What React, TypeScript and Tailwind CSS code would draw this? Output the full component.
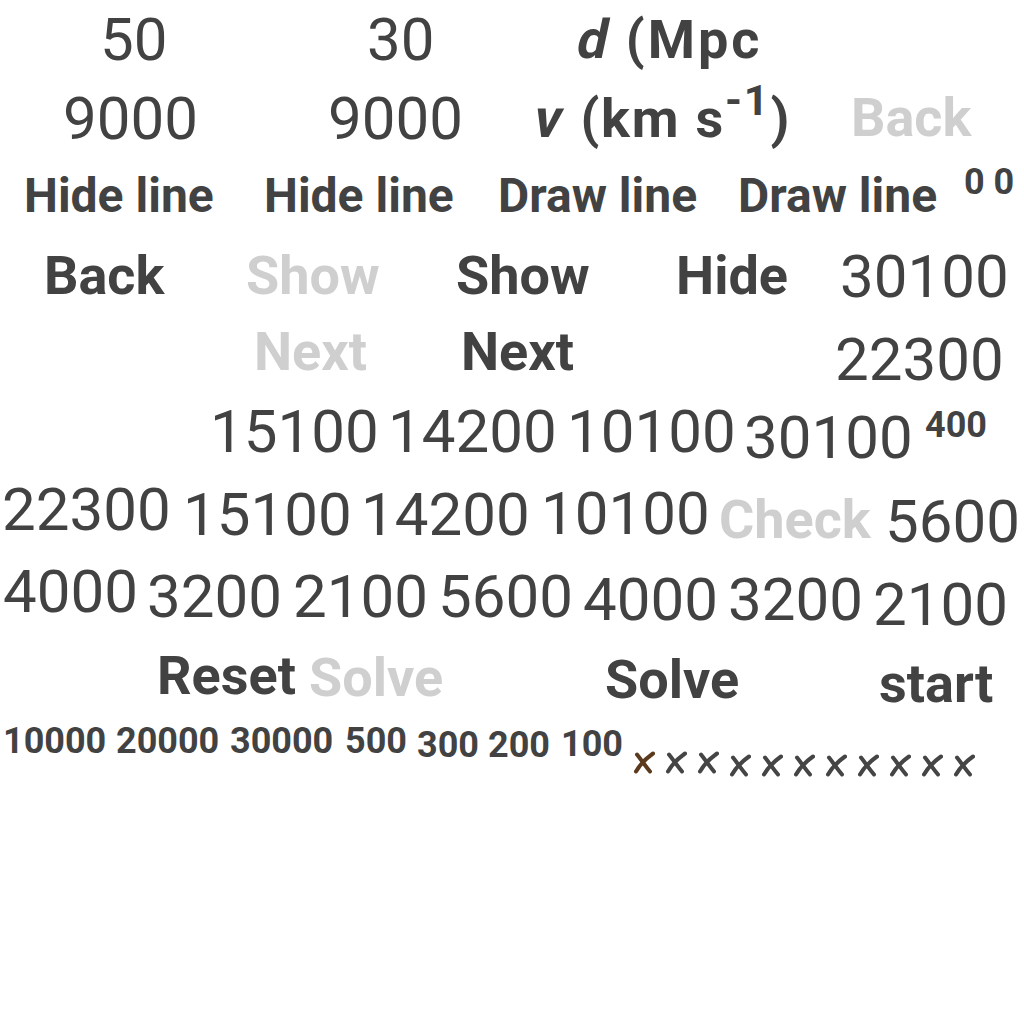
const dark = "text-[#424242]"

function Mark({ brown }: { brown?: boolean }) {
  return (
    <svg viewBox="0 0 22 22" className="w-[22px] h-[23px] shrink-0">
      <g
        fill="none"
        stroke={brown ? "#5b3a1e" : "#454545"}
        strokeWidth="4"
        strokeLinecap="round"
      >
        <path d="M4 3 C8 8 12 14 17 20" />
        <path d="M20 2 C13 7 7 13 3 20" />
      </g>
    </svg>
  )
}

export default function App() {
  return (
    <div className="w-[1024px] h-[1024px] bg-white overflow-hidden font-['Roboto',sans-serif] text-[#424242] whitespace-nowrap">
      {/* row: d */}
      <div className="flex items-start h-[85px] pl-[100px]">
        <span className="shrink-0 w-[267px] mt-[10px] text-[60px] leading-none">50</span>
        <span className="shrink-0 w-[211px] mt-[10px] text-[60px] leading-none">30</span>
        <span className="shrink-0 mt-[13px] text-[54px] leading-none font-bold tracking-[3px]">
          <span className="inline-block -skew-x-12 -mr-[2px]">d</span> (Mpc
        </span>
      </div>

      {/* row: v */}
      <div className="flex items-start h-[75px] pl-[63px]">
        <span className="shrink-0 w-[265px] mt-[4px] text-[60px] leading-none">9000</span>
        <span className="shrink-0 w-[207px] mt-[4px] text-[60px] leading-none">9000</span>
        <span className="shrink-0 w-[316px] mt-[7px] text-[54px] leading-none font-bold tracking-[1.8px]">
          <span className="inline-block -skew-x-12 mr-[1px]">v</span> (km s<sup className="text-[80%]">-1</sup>)
        </span>
        <span className="shrink-0 mt-[6px] text-[54px] leading-none font-bold text-[#cfcfcf]">Back</span>
      </div>

      {/* line toggles */}
      <div className="flex items-start h-[80px] pl-[24px]">
        <span className="shrink-0 w-[240px] mt-[12px] text-[48px] leading-none font-bold">Hide line</span>
        <span className="shrink-0 w-[234px] mt-[12px] text-[48px] leading-none font-bold">Hide line</span>
        <span className="shrink-0 w-[240px] mt-[12px] text-[48px] leading-none font-bold">Draw line</span>
        <span className="shrink-0 w-[226px] mt-[12px] text-[48px] leading-none font-bold">Draw line</span>
        <span className="shrink-0 mt-[4px] text-[36px] leading-none font-bold">0 0</span>
      </div>

      <div className="flex items-start h-[80px] pl-[44px]">
        <span className="shrink-0 w-[202px] mt-[9px] text-[54px] leading-none font-bold">Back</span>
        <span className="shrink-0 w-[210px] mt-[9px] text-[54px] leading-none font-bold text-[#cfcfcf]">Show</span>
        <span className="shrink-0 w-[220px] mt-[9px] text-[54px] leading-none font-bold">Show</span>
        <span className="shrink-0 w-[164px] mt-[9px] text-[54px] leading-none font-bold">Hide</span>
        <span className="shrink-0 mt-[7px] text-[60px] leading-none">30100</span>
      </div>

      <div className="flex items-start h-[80px] pl-[254px]">
        <span className="shrink-0 w-[207px] mt-[5px] text-[54px] leading-none font-bold text-[#cfcfcf]">Next</span>
        <span className="shrink-0 w-[374px] mt-[5px] text-[54px] leading-none font-bold">Next</span>
        <span className="shrink-0 mt-[10px] text-[60px] leading-none">22300</span>
      </div>

      {/* velocities */}
      <div className="flex items-start h-[75px] pl-[210px]">
        <span className="shrink-0 w-[178px] mt-[2px] text-[60px] leading-none">15100</span>
        <span className="shrink-0 w-[179px] mt-[2px] text-[60px] leading-none">14200</span>
        <span className="shrink-0 w-[177px] mt-[2px] text-[60px] leading-none">10100</span>
        <span className="shrink-0 w-[181px] mt-[8px] text-[60px] leading-none">30100</span>
        <span className="shrink-0 mt-[7px] text-[36px] leading-none font-bold">400</span>
      </div>

      <div className="flex items-start h-[85px] pl-[2px]">
        <span className="shrink-0 w-[181px] mt-[5px] text-[60px] leading-none">22300</span>
        <span className="shrink-0 w-[178px] mt-[10px] text-[60px] leading-none">15100</span>
        <span className="shrink-0 w-[180px] mt-[10px] text-[60px] leading-none">14200</span>
        <span className="shrink-0 w-[178px] mt-[9px] text-[60px] leading-none">10100</span>
        <span className="shrink-0 w-[166px] mt-[18px] text-[54px] leading-none font-bold text-[#cfcfcf]">Check</span>
        <span className="shrink-0 mt-[17px] text-[60px] leading-none">5600</span>
      </div>

      <div className="flex items-start h-[85px] pl-[3px]">
        <span className="shrink-0 w-[144px] mt-[2px] text-[60px] leading-none">4000</span>
        <span className="shrink-0 w-[146px] mt-[7px] text-[60px] leading-none">3200</span>
        <span className="shrink-0 w-[145px] mt-[7px] text-[60px] leading-none">2100</span>
        <span className="shrink-0 w-[145px] mt-[7px] text-[60px] leading-none">5600</span>
        <span className="shrink-0 w-[145px] mt-[10px] text-[60px] leading-none">4000</span>
        <span className="shrink-0 w-[145px] mt-[10px] text-[60px] leading-none">3200</span>
        <span className="shrink-0 mt-[15px] text-[60px] leading-none">2100</span>
      </div>

      <div className="flex items-start h-[70px] pl-[157px]">
        <span className="shrink-0 w-[152px] mt-[4px] text-[54px] leading-none font-bold">Reset</span>
        <span className="shrink-0 w-[296px] mt-[6px] text-[54px] leading-none font-bold text-[#cfcfcf]">Solve</span>
        <span className="shrink-0 w-[274px] mt-[8px] text-[54px] leading-none font-bold">Solve</span>
        <span className="shrink-0 mt-[12px] text-[54px] leading-none font-bold">start</span>
      </div>

      {/* axis labels + markers */}
      <div className={`flex items-start h-[100px] pl-[3px] ${dark}`}>
        <span className="shrink-0 w-[113px] mt-[8px] text-[36px] leading-none font-bold">10000</span>
        <span className="shrink-0 w-[114px] mt-[8px] text-[36px] leading-none font-bold">20000</span>
        <span className="shrink-0 w-[115px] mt-[8px] text-[36px] leading-none font-bold">30000</span>
        <span className="shrink-0 w-[72px] mt-[8px] text-[36px] leading-none font-bold">500</span>
        <span className="shrink-0 w-[71px] mt-[12px] text-[36px] leading-none font-bold">300</span>
        <span className="shrink-0 w-[73px] mt-[12px] text-[36px] leading-none font-bold">200</span>
        <span className="shrink-0 w-[72px] mt-[11px] text-[36px] leading-none font-bold">100</span>
        <div className="flex items-start gap-[10px]">
          <div className="flex gap-[10px] mt-[36px]">
            <Mark brown />
            <Mark />
            <Mark />
          </div>
          <div className="flex gap-[10px] mt-[39px]">
            <Mark />
            <Mark />
            <Mark />
            <Mark />
            <Mark />
            <Mark />
            <Mark />
            <Mark />
          </div>
        </div>
      </div>
    </div>
  )
}
